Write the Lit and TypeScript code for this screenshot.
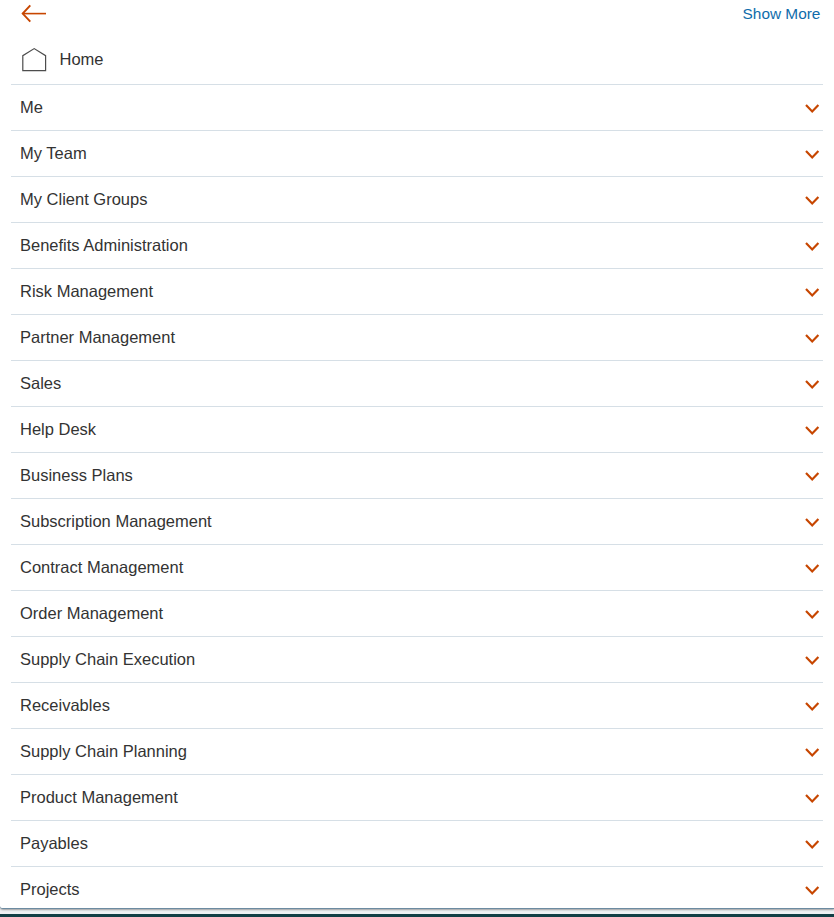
import { LitElement, html, css } from "lit";
import { customElement, property } from "lit/decorators.js";

const GROUPS = [
  "Me",
  "My Team",
  "My Client Groups",
  "Benefits Administration",
  "Risk Management",
  "Partner Management",
  "Sales",
  "Help Desk",
  "Business Plans",
  "Subscription Management",
  "Contract Management",
  "Order Management",
  "Supply Chain Execution",
  "Receivables",
  "Supply Chain Planning",
  "Product Management",
  "Payables",
  "Projects",
];

@customElement("nav-group")
export class NavGroup extends LitElement {
  @property() label = "";

  static styles = css`
    :host {
      display: flex;
      align-items: center;
      justify-content: space-between;
      box-sizing: border-box;
      height: 46px;
      padding: 0 3px 0 9px;
      border-top: 1px solid #d6dfe6;
    }
    .label {
      line-height: 20px;
      margin-bottom: 1px;
    }
    .chevron {
      display: block;
      margin-top: 3px;
    }
  `;

  render() {
    return html`
      <span class="label">${this.label}</span>
      <svg class="chevron" width="16" height="10" viewBox="0 0 16 10" fill="none" stroke="#c74600" stroke-width="2.2">
        <path d="M2 1.1 L8.2 7.4 L14.4 1.1" />
      </svg>
    `;
  }
}

@customElement("app-root")
export class AppRoot extends LitElement {
  static styles = css`
    :host {
      display: flex;
      flex-direction: column;
      height: 917px;
      overflow: hidden;
      background: #eef1f3;
      color: #333;
      font: 16.5px "Liberation Sans", Arial, sans-serif;
    }
    .panel {
      flex: none;
      box-sizing: border-box;
      height: 909px;
      padding: 0 11px;
      overflow: hidden;
      background: #fff;
      border-bottom: 1px solid #6c8ba1;
      border-bottom-left-radius: 3px;
      box-shadow: 0 1px 2px rgba(0, 0, 0, 0.35);
    }
    .top {
      display: flex;
      justify-content: space-between;
      height: 36px;
      padding: 0 2.6px 0 9px;
    }
    .back {
      display: block;
    }
    .more {
      color: #0f6cab;
      font-size: 15.4px;
      line-height: 28px;
      text-decoration: none;
    }
    .home {
      display: flex;
      align-items: center;
      gap: 12.5px;
      height: 48px;
      padding-left: 10px;
    }
    .home-label {
      line-height: 20px;
      margin-bottom: 2px;
    }
    .footer {
      flex: none;
      height: 3px;
      margin-top: 5px;
      background: #123f45;
    }
  `;

  render() {
    return html`
      <div class="panel">
        <div class="top">
          <svg class="back" width="28" height="26" viewBox="0 0 28 26" fill="none" stroke="#c74600">
            <path stroke-width="1.6" d="M2.5 13.6 H26" />
            <path stroke-width="1.9" d="M10.3 5.4 L2.7 13.6 L10.3 21.7" />
          </svg>
          <a class="more">Show More</a>
        </div>
        <div class="home">
          <svg width="26" height="26" viewBox="0 0 26 26" fill="none" stroke="#4d4d4d" stroke-width="1.2">
            <path d="M1.8 23.7 V8.7 L13.2 1.6 L24.6 8.7 V23.7 Z" />
          </svg>
          <span class="home-label">Home</span>
        </div>
        ${GROUPS.map((label) => html`<nav-group .label=${label}></nav-group>`)}
      </div>
      <div class="footer"></div>
    `;
  }
}
